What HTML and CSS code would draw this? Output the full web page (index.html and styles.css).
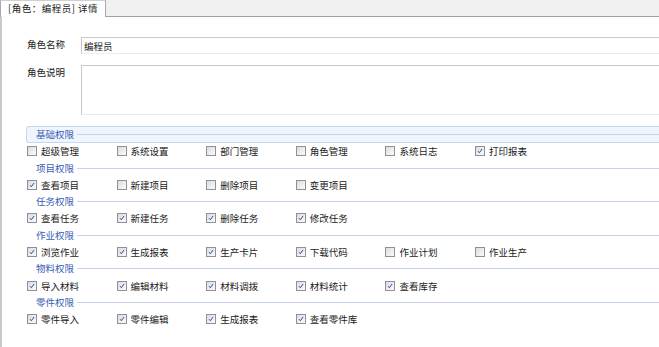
FILE: index.html
```html
<!DOCTYPE html>
<html lang="zh-CN">
<head>
    <meta charset="UTF-8">
    <title>角色详情</title>
    <link rel="stylesheet" href="styles.css">
</head>
<body>

<div class="tabs">
    <div class="tab">[角色：编程员] 详情</div>
    <div class="tab-rest"></div>
</div>

<div class="panel">
    <div class="field">
        <label>角色名称</label>
        <input class="text" type="text" value="编程员">
    </div>
    <div class="field">
        <label>角色说明</label>
        <textarea class="area"></textarea>
    </div>

    <div class="perms">
        <div class="group">
            <div class="group-title active"><span>基础权限</span></div>
            <div class="items">
                <div class="item"><span class="cb"></span>超级管理</div>
                <div class="item"><span class="cb"></span>系统设置</div>
                <div class="item"><span class="cb"></span>部门管理</div>
                <div class="item"><span class="cb"></span>角色管理</div>
                <div class="item"><span class="cb"></span>系统日志</div>
                <div class="item"><span class="cb on"><svg viewBox="0 0 10 10"><path d="M2.5 5.2 L4.2 7.2 L7.6 2.4"/></svg></span>打印报表</div>
            </div>
        </div>

        <div class="group">
            <div class="group-title"><span>项目权限</span></div>
            <div class="items">
                <div class="item"><span class="cb on"><svg viewBox="0 0 10 10"><path d="M2.5 5.2 L4.2 7.2 L7.6 2.4"/></svg></span>查看项目</div>
                <div class="item"><span class="cb"></span>新建项目</div>
                <div class="item"><span class="cb"></span>删除项目</div>
                <div class="item"><span class="cb"></span>变更项目</div>
            </div>
        </div>

        <div class="group">
            <div class="group-title"><span>任务权限</span></div>
            <div class="items">
                <div class="item"><span class="cb on"><svg viewBox="0 0 10 10"><path d="M2.5 5.2 L4.2 7.2 L7.6 2.4"/></svg></span>查看任务</div>
                <div class="item"><span class="cb on"><svg viewBox="0 0 10 10"><path d="M2.5 5.2 L4.2 7.2 L7.6 2.4"/></svg></span>新建任务</div>
                <div class="item"><span class="cb on"><svg viewBox="0 0 10 10"><path d="M2.5 5.2 L4.2 7.2 L7.6 2.4"/></svg></span>删除任务</div>
                <div class="item"><span class="cb on"><svg viewBox="0 0 10 10"><path d="M2.5 5.2 L4.2 7.2 L7.6 2.4"/></svg></span>修改任务</div>
            </div>
        </div>

        <div class="group">
            <div class="group-title"><span>作业权限</span></div>
            <div class="items">
                <div class="item"><span class="cb on"><svg viewBox="0 0 10 10"><path d="M2.5 5.2 L4.2 7.2 L7.6 2.4"/></svg></span>浏览作业</div>
                <div class="item"><span class="cb on"><svg viewBox="0 0 10 10"><path d="M2.5 5.2 L4.2 7.2 L7.6 2.4"/></svg></span>生成报表</div>
                <div class="item"><span class="cb on"><svg viewBox="0 0 10 10"><path d="M2.5 5.2 L4.2 7.2 L7.6 2.4"/></svg></span>生产卡片</div>
                <div class="item"><span class="cb on"><svg viewBox="0 0 10 10"><path d="M2.5 5.2 L4.2 7.2 L7.6 2.4"/></svg></span>下载代码</div>
                <div class="item"><span class="cb"></span>作业计划</div>
                <div class="item"><span class="cb"></span>作业生产</div>
            </div>
        </div>

        <div class="group">
            <div class="group-title"><span>物料权限</span></div>
            <div class="items">
                <div class="item"><span class="cb on"><svg viewBox="0 0 10 10"><path d="M2.5 5.2 L4.2 7.2 L7.6 2.4"/></svg></span>导入材料</div>
                <div class="item"><span class="cb on"><svg viewBox="0 0 10 10"><path d="M2.5 5.2 L4.2 7.2 L7.6 2.4"/></svg></span>编辑材料</div>
                <div class="item"><span class="cb on"><svg viewBox="0 0 10 10"><path d="M2.5 5.2 L4.2 7.2 L7.6 2.4"/></svg></span>材料调拨</div>
                <div class="item"><span class="cb on"><svg viewBox="0 0 10 10"><path d="M2.5 5.2 L4.2 7.2 L7.6 2.4"/></svg></span>材料统计</div>
                <div class="item"><span class="cb on"><svg viewBox="0 0 10 10"><path d="M2.5 5.2 L4.2 7.2 L7.6 2.4"/></svg></span>查看库存</div>
            </div>
        </div>

        <div class="group">
            <div class="group-title"><span>零件权限</span></div>
            <div class="items">
                <div class="item"><span class="cb on"><svg viewBox="0 0 10 10"><path d="M2.5 5.2 L4.2 7.2 L7.6 2.4"/></svg></span>零件导入</div>
                <div class="item"><span class="cb on"><svg viewBox="0 0 10 10"><path d="M2.5 5.2 L4.2 7.2 L7.6 2.4"/></svg></span>零件编辑</div>
                <div class="item"><span class="cb on"><svg viewBox="0 0 10 10"><path d="M2.5 5.2 L4.2 7.2 L7.6 2.4"/></svg></span>生成报表</div>
                <div class="item"><span class="cb on"><svg viewBox="0 0 10 10"><path d="M2.5 5.2 L4.2 7.2 L7.6 2.4"/></svg></span>查看零件库</div>
            </div>
        </div>
    </div>
</div>

</body>
</html>
```

FILE: styles.css
```css
html, body {
    margin: 0;
    height: 100%;
    overflow: hidden;
    background: #fff;
}
body {
    font-family: "Noto Sans CJK SC", "Liberation Sans", sans-serif;
    font-size: 9.5px;
    color: #1a1a1a;
}
.tabs {
    display: flex;
    height: 17px;
}
.tab {
    width: 106px;
    height: 17px;
    box-sizing: border-box;
    padding: 0 0 0 7px;
    line-height: 15px;
    letter-spacing: 0.5px;
    background: #fff;
    border: 1px solid #a8a8b0;
    border-bottom: none;
    border-top-color: #d0d0d0;
    white-space: nowrap;
}
.tab-rest {
    flex: 1;
    background: #f0f0f0;
    border-bottom: 1px solid #a0a0a8;
}
.panel {
    height: calc(100% - 17px);
    box-sizing: border-box;
    border-left: 2px solid #c9c9c9;
    padding: 20px 0 0 25px;
    overflow: hidden;
}
.field {
    display: flex;
    align-items: flex-start;
    margin-bottom: 11px;
}
.field label {
    width: 54px;
    flex: none;
    line-height: 15px;
}
.text, .area {
    width: 600px;
    flex: none;
    box-sizing: border-box;
    margin: 0;
    padding: 0 2px;
    font: inherit;
    color: #1a1a1a;
    border: 1px solid #c8c8c8;
    border-bottom-color: #e8ebf0;
    border-right: none;
    outline: none;
}
.text {
    height: 17px;
}
.area {
    height: 50px;
    resize: none;
}
.perms {
    margin-left: -1px;
}
.group-title {
    display: flex;
    align-items: center;
    height: 17px;
    box-sizing: border-box;
    color: #3a5cb4;
}
.group-title span {
    padding: 0 3px 0 10px;
    line-height: 15px;
}
.group-title::after {
    content: "";
    flex: 1;
    height: 1px;
    background: #c5d3ec;
}
.group-title.active {
    background: #eef5fd;
    border: 1px solid #c6d8f1;
    border-right: none;
    border-radius: 3px 0 0 3px;
}
.group-title.active span {
    padding-left: 9px;
}
.items {
    display: flex;
    align-items: center;
    height: 16.6px;
}
.item {
    width: 89.6px;
    flex: none;
    display: flex;
    align-items: center;
    white-space: nowrap;
}
.cb {
    width: 10px;
    height: 10px;
    box-sizing: border-box;
    margin: 0 4px 0 1px;
    border: 1px solid #8f9196;
    background: linear-gradient(135deg, #dcdcdc, #fbfbfb);
    display: flex;
}
.cb svg {
    width: 8px;
    height: 8px;
}
.cb svg path {
    fill: none;
    stroke: #2547a8;
    stroke-width: 1.2;
}
```
